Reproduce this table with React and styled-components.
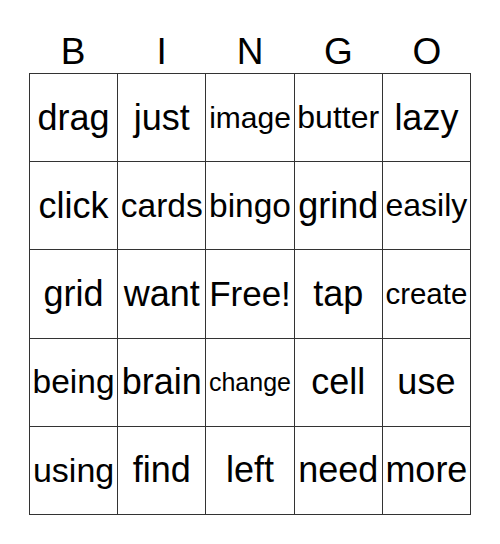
import { createGlobalStyle, styled } from "styled-components";

const GlobalStyle = createGlobalStyle`
    html, body {
        margin: 0;
        padding: 0;
        background: #fff;
    }
    body {
        font-family: "Liberation Sans", Arial, sans-serif;
        color: #000;
    }
`;

const Page = styled.div`
    width: 500px;
    height: 544px;
    padding: 34px 0 0 29px;
    box-sizing: border-box;
`;

const HeaderRow = styled.div`
    display: grid;
    grid-template-columns: repeat(5, 1fr);
    width: 442px;
    margin-bottom: 3px;
    > span {
        font-size: 37px;
        line-height: 36px;
        text-align: center;
    }
`;

const Board = styled.div`
    display: grid;
    grid-template-columns: repeat(5, 1fr);
    grid-auto-rows: 88.2px;
    width: 442px;
    box-sizing: border-box;
    border-top: 1px solid #333;
    border-left: 1px solid #333;
`;

const Cell = styled.div`
    display: flex;
    justify-content: center;
    align-items: center;
    border-right: 1px solid #333;
    border-bottom: 1px solid #333;
    font-size: ${props => props.$size}px;
    white-space: nowrap;
    overflow: hidden;
`;

const words = [
    ["drag", 36], ["just", 36], ["image", 30], ["butter", 32], ["lazy", 36],
    ["click", 36], ["cards", 33.5], ["bingo", 33.5], ["grind", 36], ["easily", 32],
    ["grid", 36], ["want", 36], ["Free!", 35], ["tap", 36], ["create", 29.5],
    ["being", 33.5], ["brain", 36], ["change", 25], ["cell", 36], ["use", 36],
    ["using", 34], ["find", 36], ["left", 36], ["need", 36], ["more", 36],
];

const App = () => {
    return (
        <Page>
            <GlobalStyle />
            <HeaderRow>
                {"BINGO".split("").map(l => <span key={l}>{l}</span>)}
            </HeaderRow>
            <Board>
                {words.map(([w, size]) => (
                    <Cell key={w} $size={size}>{w}</Cell>
                ))}
            </Board>
        </Page>
    )
}

export default App
